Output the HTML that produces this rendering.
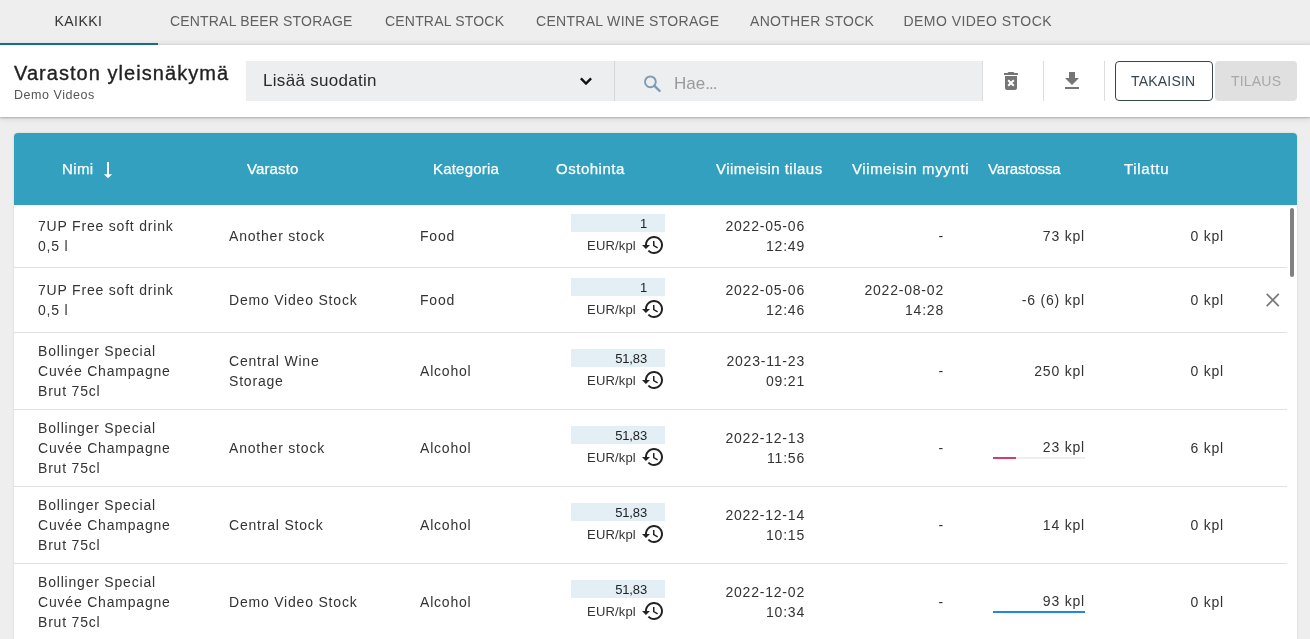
<!DOCTYPE html>
<html><head><meta charset="utf-8">
<style>
*{box-sizing:border-box;margin:0;padding:0}
html,body{width:1310px;height:639px;overflow:hidden;background:#eeeeee;-webkit-font-smoothing:antialiased;font-family:"Liberation Sans",sans-serif;color:#222}
.a{position:absolute;white-space:nowrap}
#tabs{position:absolute;left:0;top:0;width:1310px;height:45px;background:linear-gradient(#eeeeee 0,#eeeeee 39px,#e8e8e8 43px,#e6e6e6 44px);border-bottom:1px solid #dedede}
.tab{position:absolute;top:12.5px;font-size:14px;line-height:16px;color:#606060;letter-spacing:0.3px}
#uline{position:absolute;left:0;top:43px;width:158px;height:2px;background:#17718a}
#hdr{position:absolute;left:0;top:45px;width:1310px;height:72px;background:#fff;box-shadow:0 1px 1.5px rgba(0,0,0,0.22),0 2px 6px rgba(0,0,0,0.1)}
#title{left:14px;top:17px;font-size:20px;line-height:22px;color:#222;letter-spacing:1.05px;-webkit-text-stroke:0.35px #222}
#sub{left:14px;top:43px;font-size:12.5px;line-height:14px;color:#555;letter-spacing:0.55px}
#sel{position:absolute;left:246px;top:16px;width:368px;height:40px;background:#edeef0}
#srch{position:absolute;left:614px;top:16px;width:369px;height:40px;background:#edeef0;border-left:1px solid #d6d6d6;border-right:1px solid #dcdcdc}
.vdiv{position:absolute;top:16px;width:1px;height:40px;background:#dddddd}
#btn1{position:absolute;left:1115px;top:16px;width:98px;height:40px;border:1px solid #37474f;border-radius:4px;background:#fff}
#btn2{position:absolute;left:1215px;top:16px;width:82px;height:40px;border-radius:4px;background:#e0e0e0}
#card{position:absolute;left:14px;top:133px;width:1283px;height:520px;background:#fff;border-radius:4px 4px 0 0;box-shadow:0 0 2px rgba(0,0,0,0.15)}
#thead{position:absolute;left:0;top:0;width:1283px;height:72px;background:#32a0be;border-radius:4px 4px 0 0}
.th{position:absolute;top:27px;font-size:15px;line-height:17px;color:#fff;letter-spacing:0.4px;-webkit-text-stroke:0.25px #fff}
.sep{position:absolute;left:0;width:1273px;height:1px;background:#e0e0e0}
.td{position:absolute;font-size:14px;line-height:20px;color:#222}
.r{text-align:right}
.pbox{position:absolute;width:94px;height:18px;background:#e3eff5}
.pval{position:absolute;right:18px;top:2px;font-size:13px;line-height:16px;color:#222;letter-spacing:-0.15px}
.eur{position:absolute;font-size:13px;line-height:16px;color:#333;letter-spacing:0.15px}
.row{position:absolute;left:0;width:1283px}
.cell{position:absolute;top:0;height:100%;display:flex;align-items:center;font-size:14px;line-height:20px;color:#333;white-space:nowrap;letter-spacing:0.8px}
.cell.r{justify-content:flex-end;text-align:right}
.bar{position:absolute;width:92px;height:2px;background:#eeeeee}
#sb{position:absolute;left:1276px;top:75px;width:4px;height:69px;background:#808080;border-radius:2px}
</style></head>
<body><div id="root" style="position:absolute;left:0;top:0;width:1310px;height:639px;will-change:transform;background:#eeeeee">
<div id="tabs">
  <div class="tab" style="left:54.5px;color:#333;letter-spacing:0.45px">KAIKKI</div>
  <div class="tab" style="left:170px;letter-spacing:0.18px">CENTRAL BEER STORAGE</div>
  <div class="tab" style="left:385px;letter-spacing:0.19px">CENTRAL STOCK</div>
  <div class="tab" style="left:536px">CENTRAL WINE STORAGE</div>
  <div class="tab" style="left:750px">ANOTHER STOCK</div>
  <div class="tab" style="left:903.5px;letter-spacing:0.45px">DEMO VIDEO STOCK</div>
  <div id="uline"></div>
</div>
<div id="hdr">
  <div id="title" class="a">Varaston yleisnäkymä</div>
  <div id="sub" class="a">Demo Videos</div>
  <div id="sel">
    <div class="a" style="left:17px;top:10px;font-size:17px;line-height:20px;color:#2a2a2a;letter-spacing:0.3px">Lisää suodatin</div>
    <svg class="a" style="left:334px;top:16px" width="12" height="8" viewBox="0 0 12 8"><path d="M0.9 1.3L6 6.5L11.1 1.3" fill="none" stroke="#111" stroke-width="2.4"/></svg>
  </div>
  <div id="srch">
    <svg class="a" style="left:28px;top:12.5px" width="20" height="20" viewBox="0 0 20 20"><circle cx="7.4" cy="7.85" r="5.4" fill="none" stroke="#7e9bb1" stroke-width="1.9"/><path d="M11.2 11.7L16.6 16.9" stroke="#7e9bb1" stroke-width="2.3" stroke-linecap="round"/></svg>
    <div class="a" style="left:59px;top:13px;font-size:17px;line-height:20px;color:#9a9a9a">Hae<span style="letter-spacing:-0.9px">...</span></div>
  </div>
  <svg class="a" style="left:999px;top:24px" width="24" height="24" viewBox="0 0 24 24"><path fill="#757575" d="M6 19c0 1.1.9 2 2 2h8c1.1 0 2-.9 2-2V7H6v12zm2.46-7.12l1.41-1.41L12 12.59l2.12-2.12 1.41 1.41L13.41 14l2.12 2.12-1.41 1.41L12 15.41l-2.12 2.12-1.41-1.41L10.59 14l-2.13-2.12zM15.5 4l-1-1h-5l-1 1H5v2h14V4z"/></svg>
  <div class="vdiv" style="left:1043px"></div>
  <svg class="a" style="left:1060px;top:24px" width="24" height="24" viewBox="0 0 24 24"><path fill="#757575" d="M19 9h-4V3H9v6H5l7 7 7-7zM5 18v2h14v-2H5z"/></svg>
  <div class="vdiv" style="left:1104px"></div>
  <div id="btn1"><div class="a" style="left:15px;top:11px;font-size:14px;line-height:16px;color:#37474f;letter-spacing:0.2px">TAKAISIN</div></div>
  <div id="btn2"><div class="a" style="left:16px;top:12px;font-size:14px;line-height:16px;color:#a8a8a8;letter-spacing:0.2px">TILAUS</div></div>
</div>

<div id="card">
  <div id="thead">
    <div class="th" style="left:48px">Nimi</div>
    <svg class="a" style="left:88px;top:28px" width="12" height="18" viewBox="0 0 12 18"><path d="M5 1H7V13.5H5Z M1.9 13.2H10.1L6 17.3Z" fill="#fff"/></svg>
    <div class="th" style="left:233px;letter-spacing:0.12px">Varasto</div>
    <div class="th" style="left:419px;letter-spacing:0.2px">Kategoria</div>
    <div class="th" style="left:542px;letter-spacing:0.52px">Ostohinta</div>
    <div class="th" style="left:702px;letter-spacing:0.48px">Viimeisin tilaus</div>
    <div class="th" style="left:838px;letter-spacing:0.62px">Viimeisin myynti</div>
    <div class="th" style="left:974px;letter-spacing:-0.14px">Varastossa</div>
    <div class="th" style="left:1110px;letter-spacing:0.7px">Tilattu</div>
  </div>
  <div id="sb"></div>
  <!-- ROWS -->
<div class="row" style="top:72px;height:62px">
<div class="cell" style="left:24px">7UP Free soft drink<br>0,5 l</div>
<div class="cell" style="left:215px">Another stock</div>
<div class="cell" style="left:406px">Food</div>
<div class="pbox" style="left:557px;top:9px"><div class="pval">1</div></div>
<div class="eur" style="right:661.2px;top:32.5px">EUR/kpl</div>
<svg class="a" style="left:627px;top:28px" width="24" height="24" viewBox="0 0 24 24"><path fill="#222" d="M13 3c-4.97 0-9 4.030-9 9H1l3.89 3.89.07.14L9 12H6c0-3.87 3.13-7 7-7s7 3.13 7 7-3.13 7-7 7c-1.93 0-3.68-.79-4.94-2.06l-1.42 1.42C8.27 19.99 10.51 21 13 21c4.97 0 9-4.03 9-9s-4.03-9-9-9zm-1 5v5l4.28 2.54.72-1.21-3.5-2.08V8H12z"/></svg>
<div class="cell r" style="right:492px">2022-05-06<br>12:49</div>
<div class="cell r" style="right:353px">-</div>
<div class="cell r" style="right:212px">73 kpl</div>
<div class="cell r" style="right:73px">0 kpl</div>
</div>
<div class="sep" style="top:134px"></div>
<div class="row" style="top:135px;height:64px">
<div class="cell" style="left:24px">7UP Free soft drink<br>0,5 l</div>
<div class="cell" style="left:215px">Demo Video Stock</div>
<div class="cell" style="left:406px">Food</div>
<div class="pbox" style="left:557px;top:10px"><div class="pval">1</div></div>
<div class="eur" style="right:661.2px;top:33.5px">EUR/kpl</div>
<svg class="a" style="left:627px;top:29px" width="24" height="24" viewBox="0 0 24 24"><path fill="#222" d="M13 3c-4.97 0-9 4.030-9 9H1l3.89 3.89.07.14L9 12H6c0-3.87 3.13-7 7-7s7 3.13 7 7-3.13 7-7 7c-1.93 0-3.68-.79-4.94-2.06l-1.42 1.42C8.27 19.99 10.51 21 13 21c4.97 0 9-4.03 9-9s-4.03-9-9-9zm-1 5v5l4.28 2.54.72-1.21-3.5-2.08V8H12z"/></svg>
<div class="cell r" style="right:492px">2022-05-06<br>12:46</div>
<div class="cell r" style="right:353px">2022-08-02<br>14:28</div>
<div class="cell r" style="right:212px">-6 (6) kpl</div>
<div class="cell r" style="right:73px">0 kpl</div>
<svg class="a" style="left:1247px;top:20px" width="24" height="24" viewBox="0 0 24 24"><path d="M5.7 5.9L17.8 18.1M17.8 5.9L5.7 18.1" stroke="#787878" stroke-width="1.7" fill="none"/></svg>
</div>
<div class="sep" style="top:199px"></div>
<div class="row" style="top:200px;height:76px">
<div class="cell" style="left:24px">Bollinger Special<br>Cuvée Champagne<br>Brut 75cl</div>
<div class="cell" style="left:215px">Central Wine<br>Storage</div>
<div class="cell" style="left:406px">Alcohol</div>
<div class="pbox" style="left:557px;top:16px"><div class="pval">51,83</div></div>
<div class="eur" style="right:661.2px;top:39.5px">EUR/kpl</div>
<svg class="a" style="left:627px;top:35px" width="24" height="24" viewBox="0 0 24 24"><path fill="#222" d="M13 3c-4.97 0-9 4.030-9 9H1l3.89 3.89.07.14L9 12H6c0-3.87 3.13-7 7-7s7 3.13 7 7-3.13 7-7 7c-1.93 0-3.68-.79-4.94-2.06l-1.42 1.42C8.27 19.99 10.51 21 13 21c4.97 0 9-4.03 9-9s-4.03-9-9-9zm-1 5v5l4.28 2.54.72-1.21-3.5-2.08V8H12z"/></svg>
<div class="cell r" style="right:492px">2023-11-23<br>09:21</div>
<div class="cell r" style="right:353px">-</div>
<div class="cell r" style="right:212px">250 kpl</div>
<div class="cell r" style="right:73px">0 kpl</div>
</div>
<div class="sep" style="top:276px"></div>
<div class="row" style="top:277px;height:76px">
<div class="cell" style="left:24px">Bollinger Special<br>Cuvée Champagne<br>Brut 75cl</div>
<div class="cell" style="left:215px">Another stock</div>
<div class="cell" style="left:406px">Alcohol</div>
<div class="pbox" style="left:557px;top:16px"><div class="pval">51,83</div></div>
<div class="eur" style="right:661.2px;top:39.5px">EUR/kpl</div>
<svg class="a" style="left:627px;top:35px" width="24" height="24" viewBox="0 0 24 24"><path fill="#222" d="M13 3c-4.97 0-9 4.030-9 9H1l3.89 3.89.07.14L9 12H6c0-3.87 3.13-7 7-7s7 3.13 7 7-3.13 7-7 7c-1.93 0-3.68-.79-4.94-2.06l-1.42 1.42C8.27 19.99 10.51 21 13 21c4.97 0 9-4.03 9-9s-4.03-9-9-9zm-1 5v5l4.28 2.54.72-1.21-3.5-2.08V8H12z"/></svg>
<div class="cell r" style="right:492px">2022-12-13<br>11:56</div>
<div class="cell r" style="right:353px">-</div>
<div class="cell r" style="right:212px;top:-1px">23 kpl</div>
<div class="bar" style="left:979px;top:47px"><div style="width:23px;height:2px;background:#d63a6e"></div></div>
<div class="cell r" style="right:73px">6 kpl</div>
</div>
<div class="sep" style="top:353px"></div>
<div class="row" style="top:354px;height:76px">
<div class="cell" style="left:24px">Bollinger Special<br>Cuvée Champagne<br>Brut 75cl</div>
<div class="cell" style="left:215px">Central Stock</div>
<div class="cell" style="left:406px">Alcohol</div>
<div class="pbox" style="left:557px;top:16px"><div class="pval">51,83</div></div>
<div class="eur" style="right:661.2px;top:39.5px">EUR/kpl</div>
<svg class="a" style="left:627px;top:35px" width="24" height="24" viewBox="0 0 24 24"><path fill="#222" d="M13 3c-4.97 0-9 4.030-9 9H1l3.89 3.89.07.14L9 12H6c0-3.87 3.13-7 7-7s7 3.13 7 7-3.13 7-7 7c-1.93 0-3.68-.79-4.94-2.06l-1.42 1.42C8.27 19.99 10.51 21 13 21c4.97 0 9-4.03 9-9s-4.03-9-9-9zm-1 5v5l4.28 2.54.72-1.21-3.5-2.08V8H12z"/></svg>
<div class="cell r" style="right:492px">2022-12-14<br>10:15</div>
<div class="cell r" style="right:353px">-</div>
<div class="cell r" style="right:212px">14 kpl</div>
<div class="cell r" style="right:73px">0 kpl</div>
</div>
<div class="sep" style="top:430px"></div>
<div class="row" style="top:431px;height:76px">
<div class="cell" style="left:24px">Bollinger Special<br>Cuvée Champagne<br>Brut 75cl</div>
<div class="cell" style="left:215px">Demo Video Stock</div>
<div class="cell" style="left:406px">Alcohol</div>
<div class="pbox" style="left:557px;top:16px"><div class="pval">51,83</div></div>
<div class="eur" style="right:661.2px;top:39.5px">EUR/kpl</div>
<svg class="a" style="left:627px;top:35px" width="24" height="24" viewBox="0 0 24 24"><path fill="#222" d="M13 3c-4.97 0-9 4.030-9 9H1l3.89 3.89.07.14L9 12H6c0-3.87 3.13-7 7-7s7 3.13 7 7-3.13 7-7 7c-1.93 0-3.68-.79-4.94-2.06l-1.42 1.42C8.27 19.99 10.51 21 13 21c4.97 0 9-4.03 9-9s-4.03-9-9-9zm-1 5v5l4.28 2.54.72-1.21-3.5-2.08V8H12z"/></svg>
<div class="cell r" style="right:492px">2022-12-02<br>10:34</div>
<div class="cell r" style="right:353px">-</div>
<div class="cell r" style="right:212px;top:-1px">93 kpl</div>
<div class="bar" style="left:979px;top:47px"><div style="width:92px;height:2px;background:#1e88e5"></div></div>
<div class="cell r" style="right:73px">0 kpl</div>
</div>
<div class="sep" style="top:507px"></div>
<!-- /ROWS -->
</div>
</div></body></html>
